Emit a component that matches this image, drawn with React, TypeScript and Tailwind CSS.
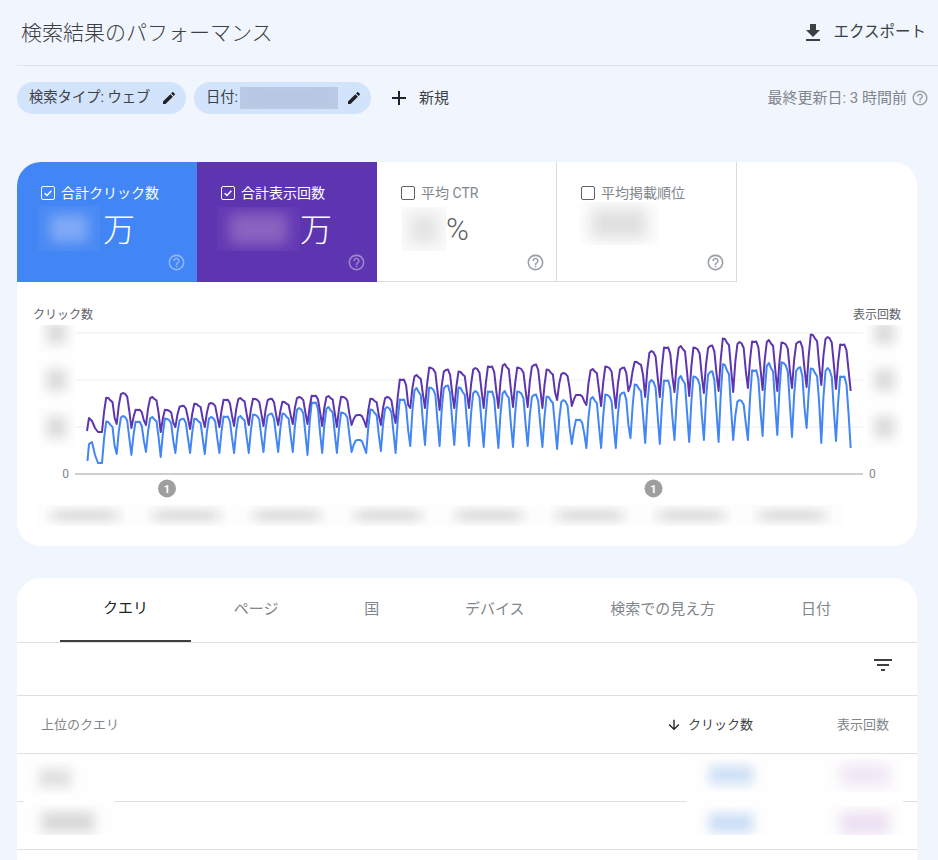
import clsx from 'clsx';

const ICONS = {
  help: 'M11 18h2v-2h-2v2zm1-16C6.48 2 2 6.48 2 12s4.48 10 10 10 10-4.48 10-10S17.52 2 12 2zm0 18c-4.41 0-8-3.59-8-8s3.59-8 8-8 8 3.59 8 8-3.59 8-8 8zm0-14c-2.21 0-4 1.79-4 4h2c0-1.1.9-2 2-2s2 .9 2 2c0 2-3 1.75-3 5h2c0-2.25 3-2.5 3-5 0-2.21-1.79-4-4-4z',
  edit: 'M3 17.25V21h3.75L17.81 9.94l-3.75-3.75L3 17.25zM20.71 7.04c.39-.39.39-1.02 0-1.41l-2.34-2.34c-.39-.39-1.02-.39-1.41 0l-1.83 1.83 3.75 3.75 1.83-1.83z',
  download: 'M19 9h-4V3H9v6H5l7 7 7-7zM5 18v2h14v-2H5z',
  add: 'M19 13h-6v6h-2v-6H5v-2h6V5h2v6h6v2z',
  filter: 'M10 18h4v-2h-4v2zM3 6v2h18V6H3zm3 7h12v-2H6v2z',
  arrow: 'M20 12l-1.41-1.41L13 16.17V4h-2v12.17l-5.58-5.59L4 12l8 8 8-8z',
};

function Icon({ d, className }: { d: string; className?: string }) {
  return (
    <svg viewBox="0 0 24 24" className={clsx('shrink-0 fill-current', className)}>
      <path d={d} />
    </svg>
  );
}

// a redacted value in the screenshot: a flat patch with a blurred smear inside
function Blur({ className, smear }: { className?: string; smear?: string }) {
  return (
    <div className={clsx('shrink-0 overflow-hidden', className)}>
      <div className={clsx('h-full w-full blur-[10px]', smear)} />
    </div>
  );
}

// weekly low points and highs read off the chart
const PURPLE_DIPS = [432, 424, 428, 425, 432, 427, 429, 427, 427, 426, 425, 426, 425, 424, 424, 426, 427, 425, 427, 425, 423, 408, 408, 410, 408, 408, 408, 408, 407, 407, 408, 400, 406, 405, 406, 408, 385, 397, 397, 392, 396, 393, 391, 392, 388, 390, 391, 388, 387, 385, 389, 391];
const PURPLE_PEAKS = [398, 393, 410, 397, 410, 406, 404, 403, 400, 398, 399, 399, 402, 397, 396, 396, 397, 415, 399, 397, 380, 375, 368, 370, 372, 368, 367, 364, 368, 365, 370, 373, 395, 369, 367, 368, 362, 351, 348, 346, 348, 346, 339, 342, 342, 340, 343, 342, 335, 337, 345];
const BLUE_DIPS = [463, 454, 455, 452, 457, 453, 453, 454, 453, 453, 453, 452, 452, 452, 455, 453, 453, 452, 453, 451, 453, 446, 445, 446, 445, 446, 447, 448, 447, 446, 447, 449, 444, 448, 448, 448, 438, 443, 444, 440, 442, 440, 442, 440, 440, 436, 435, 437, 428, 443, 441, 448];
const BLUE_PEAKS = [422, 416, 422, 417, 419, 419, 419, 417, 417, 416, 415, 414, 414, 408, 403, 407, 413, 440, 410, 407, 400, 388, 388, 386, 388, 391, 392, 391, 392, 395, 397, 400, 420, 397, 395, 393, 385, 380, 381, 376, 377, 372, 365, 400, 371, 363, 363, 368, 369, 368, 377];

// how far up from dip to peak the line is on each day of the week
const WEEK_SHAPE = [0, 0.6, 0.96, 1, 0.93, 0.88, 0.42];

function weekLine(dips: number[], peaks: number[], lead: string) {
  const pts: string[] = [lead];
  peaks.forEach((peak, k) => {
    const x0 = 102 + 14.68 * k;
    WEEK_SHAPE.forEach((f, day) => {
      const wobble = day === 4 ? (k % 3) * 0.04 : day === 2 ? ((k + 1) % 2) * 0.05 : 0;
      const y = dips[k] + (peak - dips[k]) * (f + wobble);
      pts.push(`${(x0 + (14.68 * day) / 7).toFixed(1)},${y.toFixed(1)}`);
    });
  });
  pts.push(`850.7,${dips[dips.length - 1]}`);
  return pts.join(' ');
}

const purpleLine = weekLine(PURPLE_DIPS, PURPLE_PEAKS, '87,431 89,418 92,421 95,428 98,432');
const blueLine = weekLine(BLUE_DIPS, BLUE_PEAKS, '87.5,461 89,444 92,442 95,455 98,463');

function Checkbox({ on }: { on: boolean }) {
  if (!on) return <span className="h-[14px] w-[14px] shrink-0 rounded-[2px] border-[1.5px] border-[#5f6368]" />;
  return (
    <span className="flex h-[14px] w-[14px] shrink-0 items-center justify-center rounded-[2px] border-[1.5px] border-white">
      <svg viewBox="0 0 12 12" className="h-[10px] w-[10px] fill-none stroke-white stroke-[1.8]">
        <path d="M2 6.2 4.8 9 10 3.4" />
      </svg>
    </span>
  );
}

function MetricTile({
  label,
  on,
  className,
  labelClass,
  helpClass,
  children,
}: {
  label: string;
  on: boolean;
  className: string;
  labelClass: string;
  helpClass: string;
  children: React.ReactNode;
}) {
  return (
    <div className={clsx('flex h-[120px] w-[180px] flex-col pl-6', className)}>
      <div className={clsx('mt-[21px] flex h-5 items-center gap-[6px] text-[14px]', labelClass)}>
        <Checkbox on={on} />
        {label}
      </div>
      <div className="mt-[3px] h-[45px]">{children}</div>
      <div className="flex flex-1 items-start justify-end pr-[11px] pt-[2px]">
        <Icon d={ICONS.help} className={clsx('h-[19px] w-[19px]', helpClass)} />
      </div>
    </div>
  );
}

function AxisBlur() {
  return (
    <div className="flex h-[125px] w-[37px] flex-col gap-[7px] overflow-hidden bg-[#fefefe]">
      <Blur className="-mt-[12px] h-[40px]" smear="scale-[0.55] bg-[#dcdcdc]" />
      <Blur className="h-[40px]" smear="scale-[0.55] bg-[#dcdcdc]" />
      <Blur className="h-[40px]" smear="scale-[0.55] bg-[#dcdcdc]" />
    </div>
  );
}

const TABS = ['クエリ', 'ページ', '国', 'デバイス', '検索での見え方', '日付'];

function App() {
  return (
    <div className="h-[860px] overflow-hidden bg-[#f1f5fe] font-['Roboto','Noto_Sans_CJK_JP',sans-serif]">
      <div className="ml-[17px] flex h-[66px] items-center justify-between border-b border-[#e0e2e6] pl-[4px] pr-[12px]">
        <h1 className="mt-[3px] text-[21px] font-light text-[#3c4043]">検索結果のパフォーマンス</h1>
        <div className="flex items-center gap-[8px] text-[15.5px] text-[#3c4043]">
          <Icon d={ICONS.download} className="h-6 w-6" />
          エクスポート
        </div>
      </div>

      <div className="mt-[16px] flex h-[32px] items-center justify-between pl-[17px] pr-[9px]">
        <div className="flex items-center">
          <div className="flex h-8 w-[169px] items-center justify-between rounded-full bg-[#d2e3fc] pl-3 pr-[9px] text-[14.3px] text-[#3c4043]">
            検索タイプ: ウェブ
            <Icon d={ICONS.edit} className="h-[16px] w-[16px] text-[#202124]" />
          </div>
          <div className="ml-2 flex h-8 w-[177px] items-center rounded-full bg-[#d2e3fc] pl-3 pr-[9px] text-[14.3px] text-[#3c4043]">
            日付:
            <Blur className="ml-[2px] h-[22px] w-[98px] bg-[#bccde8]" smear="bg-[#b4c6e0]" />
            <Icon d={ICONS.edit} className="ml-auto h-[16px] w-[16px] text-[#202124]" />
          </div>
          <div className="ml-[16px] flex items-center gap-[8px] text-[15px] text-[#3c4043]">
            <Icon d={ICONS.add} className="h-6 w-6 text-[#202124]" />
            新規
          </div>
        </div>
        <div className="flex items-center gap-[4px] text-[15px] text-[#80868b]">
          最終更新日: 3 時間前
          <Icon d={ICONS.help} className="h-[18px] w-[18px] text-[#9aa0a6]" />
        </div>
      </div>

      <section className="ml-[17px] mt-[48px] h-[384px] w-[900px] overflow-hidden rounded-[24px] bg-white">
        <div className="flex">
          <MetricTile label="合計クリック数" on className="bg-[#4285f4]" labelClass="text-white" helpClass="text-white/40">
            <div className="flex h-[45px] items-center text-[32px] font-light leading-none text-white">
              <Blur className="-ml-[3px] h-[45px] w-[62px] bg-[#4a8af4]" smear="scale-[0.6] bg-[#7fa9f6]" />
              <span className="mt-[2px] pl-[3px]">万</span>
            </div>
          </MetricTile>
          <MetricTile label="合計表示回数" on className="bg-[#5e35b1]" labelClass="text-white" helpClass="text-white/40">
            <div className="flex h-[45px] items-center text-[32px] font-light leading-none text-white">
              <Blur className="-ml-[4px] h-[44px] w-[83px] bg-[#6338b4]" smear="scale-[0.7] bg-[#8a64c0]" />
              <span className="mt-[2px]">万</span>
            </div>
          </MetricTile>
          <MetricTile label="平均 CTR" on={false} className="border-b border-r border-[#dadce0] bg-white" labelClass="text-[#80868b]" helpClass="text-[#9aa0a6]">
            <div className="flex h-[45px] items-center text-[31px] font-light leading-none text-[#5f6368]">
              <Blur className="ml-px h-[44px] w-[44px] bg-[#fafafa]" smear="scale-[0.65] bg-[#e4e4e4]" />
              <span className="mt-[2px]">%</span>
            </div>
          </MetricTile>
          <MetricTile label="平均掲載順位" on={false} className="border-b border-r border-[#dadce0] bg-white" labelClass="text-[#80868b]" helpClass="text-[#9aa0a6]">
            <Blur className="-ml-[2px] -mt-[4px] h-[43px] w-[80px] bg-[#fdfdfd]" smear="scale-[0.7] bg-[#e0e0e0]" />
          </MetricTile>
        </div>

        <div className="box-content flex h-[19px] items-end justify-between px-4 pt-[24px] text-[12px] leading-[19px] text-[#5f6368]">
          <span>クリック数</span>
          <span>表示回数</span>
        </div>

        <div className="flex h-[175px]">
          <div className="w-[58px] pl-[21px]">
            <AxisBlur />
            <div className="mt-[16px] h-4 pr-[6px] text-right text-[12px] leading-4 text-[#80868b]">0</div>
          </div>
          <svg width="788" height="175" viewBox="75 325 788 175" className="shrink-0">
            <path d="M75 333H863M75 380H863M75 427H863" className="fill-none stroke-[#eeeeee]" />
            <path d="M75 474H863" className="fill-none stroke-[#9e9e9e]" />
            <polyline points={blueLine} className="fill-none stroke-[#4285f4] stroke-2" strokeLinejoin="round" />
            <polyline points={purpleLine} className="fill-none stroke-[#5e35b1] stroke-2" strokeLinejoin="round" />
            <circle cx="167" cy="488.5" r="9" className="fill-[#9e9e9e]" />
            <text x="167" y="492.5" textAnchor="middle" className="fill-white text-[11px] font-bold">1</text>
            <circle cx="653.5" cy="488.5" r="9" className="fill-[#9e9e9e]" />
            <text x="653.5" y="492.5" textAnchor="middle" className="fill-white text-[11px] font-bold">1</text>
          </svg>
          <div className="pl-[3px]">
            <AxisBlur />
            <div className="mt-[16px] h-4 pl-[3px] text-[12px] leading-4 text-[#80868b]">0</div>
          </div>
        </div>

        <div className="ml-[21px] mt-[5px] flex h-[21px] w-[805px] items-center justify-between bg-[#fdfdfd] pl-[7px] pr-[11px]">
          {[0, 1, 2, 3, 4, 5, 6, 7].map((i) => (
            <Blur key={i} className="h-[21px] w-[80px]" smear="scale-x-[0.8] scale-y-[0.5] bg-[#d8d8d8]" />
          ))}
        </div>
      </section>

      <section className="ml-[17px] mt-[32px] w-[900px] rounded-t-[24px] bg-white">
        <div className="flex h-[65px] border-b border-[#e0e0e0] pl-[43px]">
          {TABS.map((t, i) => (
            <div
              key={t}
              className={clsx(
                'flex h-[64px] items-center justify-center px-[42.9px] pb-[1px] text-[15px]',
                i === 0 ? 'border-b-2 border-[#3c4043] text-[#202124]' : 'text-[#80868b]',
              )}
            >
              {t}
            </div>
          ))}
        </div>
        <div className="flex h-[53px] items-center justify-end border-b border-[#e0e0e0] pb-[8px] pr-[22px]">
          <Icon d={ICONS.filter} className="h-6 w-6 text-[#3c4043]" />
        </div>
        <div className="flex h-[58px] items-center border-b border-[#e0e0e0] pl-6 pr-[28px] text-[13px] text-[#80868b]">
          <span>上位のクエリ</span>
          <Icon d={ICONS.arrow} className="ml-auto h-4 w-4 text-[#202124]" />
          <span className="ml-[6px] text-[#3c4043]">クリック数</span>
          <span className="ml-[84px]">表示回数</span>
        </div>
        <div className="relative">
          <div className="h-[48px] border-b border-[#e0e0e0]" />
          <div className="h-[48px] border-b border-[#e0e0e0]" />
          <div className="h-[48px]" />
          <div className="absolute left-[7px] top-[4px] flex h-[77px] w-[90px] flex-col gap-[10px] overflow-hidden bg-[#fefefe] pt-[3px]">
            <Blur className="ml-[2px] h-[34px] w-[58px]" smear="scale-[0.55] bg-[#e0e0e0]" />
            <Blur className="h-[34px] w-[88px]" smear="scale-[0.6] bg-[#d8d8d8]" />
          </div>
          <div className="absolute left-[670px] top-[4px] flex h-[77px] w-[216px] justify-between overflow-hidden bg-[#fefefe] pl-[4px]">
            <div className="flex flex-col gap-[14px]">
              <Blur className="h-[34px] w-[80px]" smear="scale-[0.55] bg-[#cfe0f6]" />
              <Blur className="h-[34px] w-[80px]" smear="scale-[0.55] bg-[#cbddf6]" />
            </div>
            <div className="flex flex-col gap-[14px]">
              <Blur className="h-[34px] w-[76px]" smear="scale-[0.65] bg-[#f0e6f4]" />
              <Blur className="h-[34px] w-[76px]" smear="scale-[0.65] bg-[#ebdff2]" />
            </div>
          </div>
        </div>
      </section>
    </div>
  );
}

export default App;
